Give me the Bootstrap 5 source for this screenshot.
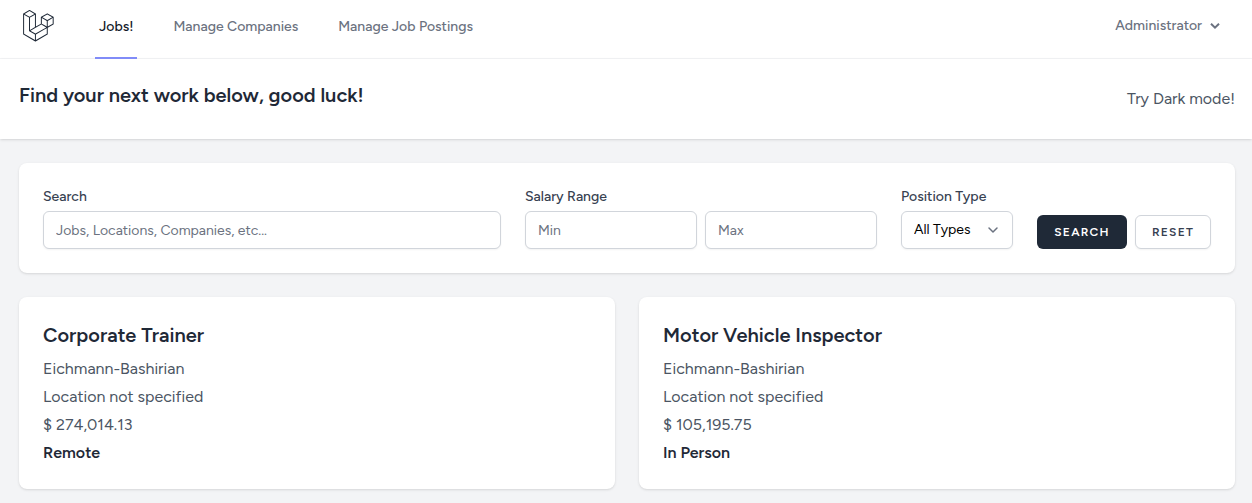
<!DOCTYPE html>
<html lang="en">
<head>
<meta charset="utf-8">
<title>Jobs</title>
<meta name="viewport" content="width=device-width, initial-scale=1">
<link href="https://cdn.jsdelivr.net/npm/bootstrap@5.3.0/dist/css/bootstrap.min.css" rel="stylesheet">
<style>
body { background: #f3f4f6; color: #4b5563; font: 400 16px/24px "Figtree", Inter, "Liberation Sans", sans-serif; }
.gutter { padding-left: 19px; padding-right: 17px; }
.topbar { min-height: 59px; border-bottom: 1px solid #f3f4f6; }
.site-logo { margin: 0 41px 7px 4px; color: #1f2937; }
.tab-list { gap: 32px; }
.tab-link { display: flex; align-items: center; margin-bottom: -1px; padding: 0 4px 4px; font-size: 14px; line-height: 20px; font-weight: 500; color: #6b7280; text-decoration: none; border-bottom: 2px solid transparent; }
.tab-link.current { color: #111827; border-color: #818cf8; }
.user-menu { margin: 0 15px 7px 0; padding: 0; gap: 8px; border: 0; font-size: 14px; line-height: 20px; font-weight: 500; color: #6b7280; }
.page-head { padding-top: 24px; padding-bottom: 24px; min-height: 80px; }
.soft-shadow { box-shadow: 0 1px 3px rgba(0,0,0,.1), 0 1px 2px -1px rgba(0,0,0,.1); }
.page-title { font-size: 20px; line-height: 25px; font-weight: 600; color: #1f2937; }
.theme-link { padding: 4px 0; color: #4b5563; text-decoration: none; }
.panel { background: #fff; border-radius: 8px; padding: 24px; }
.field-label { display: block; margin-bottom: 4px; font-size: 14px; line-height: 20px; font-weight: 500; color: #374151; }
.form-control, .form-select { height: 38px; padding: 8px 12px; font-size: 14px; line-height: 20px; color: #000; border: 1px solid #d1d5db; border-radius: 6px; box-shadow: 0 1px 2px rgba(0,0,0,.05); }
.form-control::placeholder { color: #6b7280; }
.form-select { padding-right: 40px; background-size: 20px 20px; background-position: right 9px center; background-image: url("data:image/svg+xml,%3csvg xmlns='http://www.w3.org/2000/svg' fill='none' viewBox='0 0 20 20'%3e%3cpath stroke='%236b7280' stroke-linecap='round' stroke-linejoin='round' stroke-width='1.5' d='M6 8l4 4 4-4'/%3e%3c/svg%3e"); }
.range-field { width: 352px; }
.type-field { width: 112px; }
.act-btn { height: 34px; padding: 0; font-size: 12px; line-height: 16px; font-weight: 600; letter-spacing: .1em; text-transform: uppercase; border-radius: 6px; }
.act-search { width: 90px; background: #1f2937; color: #fff; }
.act-reset { width: 76px; background: #fff; color: #374151; border: 1px solid #d1d5db; box-shadow: 0 1px 2px rgba(0,0,0,.05); }
.job-title { margin-bottom: 8px; font-size: 20px; line-height: 28px; font-weight: 600; color: #1f2937; }
.job-kind { font-weight: 600; color: #1f2937; }
</style>
</head>
<body>
<nav class="topbar gutter bg-white d-flex justify-content-between" aria-label="Main">
  <div class="d-flex">
    <a class="site-logo d-flex align-items-center" href="#" aria-label="Home">
      <svg width="31" height="32" viewBox="0 0 50 52" fill="currentColor" aria-hidden="true"><path d="M49.626 11.564a.809.809 0 0 1 .028.209v10.972a.8.8 0 0 1-.402.694l-9.209 5.302V39.25c0 .286-.152.55-.4.694L20.42 51.01c-.044.025-.092.041-.14.058-.018.006-.035.017-.054.022a.805.805 0 0 1-.41 0c-.022-.006-.042-.018-.063-.026-.044-.016-.09-.03-.132-.054L.402 39.944A.801.801 0 0 1 0 39.25V6.334c0-.072.01-.142.028-.21.006-.023.02-.044.028-.067.015-.042.029-.085.051-.124.015-.026.037-.047.055-.071.023-.032.044-.065.071-.093.023-.023.053-.04.079-.06.029-.024.055-.05.088-.069h.001l9.61-5.533a.802.802 0 0 1 .8 0l9.61 5.533h.002c.032.02.059.045.088.068.026.02.055.038.078.06.028.029.048.062.072.094.017.024.04.045.054.071.023.04.036.082.052.124.008.023.022.044.028.068a.809.809 0 0 1 .028.209v20.559l8.008-4.611v-10.51c0-.07.01-.141.028-.208.007-.024.02-.045.028-.068.016-.042.03-.085.052-.124.015-.026.037-.047.054-.071.024-.032.044-.065.072-.093.023-.023.052-.04.078-.06.03-.024.056-.05.088-.069h.001l9.611-5.533a.801.801 0 0 1 .8 0l9.61 5.533c.034.02.06.045.09.068.025.02.054.038.077.06.028.029.048.062.072.094.018.024.04.045.054.071.023.039.036.082.052.124.009.023.022.044.028.068zm-1.574 10.718v-9.124l-3.363 1.936-4.646 2.675v9.124l8.01-4.611zm-9.61 16.505v-9.13l-4.57 2.61-13.05 7.448v9.216l17.62-10.144zM1.602 7.719v31.068L19.22 48.93v-9.214l-9.204-5.209-.003-.002-.004-.002c-.031-.018-.057-.044-.086-.066-.025-.02-.054-.036-.076-.058l-.002-.003c-.026-.025-.044-.056-.066-.084-.02-.027-.044-.05-.06-.078l-.001-.003c-.018-.03-.029-.066-.042-.1-.013-.03-.03-.058-.038-.09v-.001c-.01-.038-.012-.078-.016-.117-.004-.03-.012-.06-.012-.09v-.002-21.481L4.965 9.654 1.602 7.72zm8.81-5.994L2.405 6.334l8.005 4.609 8.006-4.61-8.006-4.608zm4.164 28.764l4.645-2.674V7.719l-3.363 1.936-4.646 2.675v20.096l3.364-1.937zM39.243 7.164l-8.006 4.609 8.006 4.609 8.005-4.61-8.005-4.608zm-.801 10.605l-4.646-2.675-3.363-1.936v9.124l4.645 2.674 3.364 1.937v-9.124zM20.02 38.33l11.743-6.704 5.87-3.35-8-4.606-9.211 5.303-8.395 4.833 7.993 4.524z"/></svg>
    </a>
    <div class="tab-list d-flex">
      <a class="tab-link current" href="#" aria-current="page">Jobs!</a>
      <a class="tab-link" href="#">Manage Companies</a>
      <a class="tab-link" href="#">Manage Job Postings</a>
    </div>
  </div>
  <button class="user-menu btn d-flex align-items-center" type="button">Administrator
    <svg width="10" height="6" viewBox="0 0 10 6" fill="none" stroke="currentColor" stroke-width="2" aria-hidden="true"><path d="M1 .7 5 4.6 9 .7"/></svg>
  </button>
</nav>
<header class="page-head gutter bg-white soft-shadow d-flex justify-content-between">
  <h1 class="page-title mb-0">Find your next work below, good luck!</h1>
  <a class="theme-link" href="#">Try Dark mode!</a>
</header>
<main class="gutter py-4 d-flex flex-column gap-4">
  <form class="panel soft-shadow d-flex flex-wrap flex-lg-nowrap align-items-end gap-4">
    <div class="flex-grow-1">
      <label class="field-label" for="q">Search</label>
      <input class="form-control" id="q" type="text" placeholder="Jobs, Locations, Companies, etc...">
    </div>
    <div class="range-field flex-shrink-0">
      <label class="field-label" for="min">Salary Range</label>
      <div class="d-flex gap-2">
        <input class="form-control" id="min" type="text" placeholder="Min">
        <input class="form-control" id="max" type="text" placeholder="Max" aria-label="Maximum salary">
      </div>
    </div>
    <div class="type-field flex-shrink-0">
      <label class="field-label" for="kind">Position Type</label>
      <select class="form-select" id="kind"><option>All Types</option><option>Remote</option><option>In Person</option></select>
    </div>
    <div class="d-flex gap-2">
      <button class="act-btn act-search btn" type="submit">Search</button>
      <button class="act-btn act-reset btn" type="reset">Reset</button>
    </div>
  </form>
  <div class="row row-cols-1 row-cols-md-2 g-4">
    <div class="col">
      <article class="panel soft-shadow d-flex flex-column gap-1">
        <h2 class="job-title mb-1">Corporate Trainer</h2>
        <div>Eichmann-Bashirian</div>
        <div>Location not specified</div>
        <div>$ 274,014.13</div>
        <div class="job-kind">Remote</div>
      </article>
    </div>
    <div class="col">
      <article class="panel soft-shadow d-flex flex-column gap-1">
        <h2 class="job-title mb-1">Motor Vehicle Inspector</h2>
        <div>Eichmann-Bashirian</div>
        <div>Location not specified</div>
        <div>$ 105,195.75</div>
        <div class="job-kind">In Person</div>
      </article>
    </div>
  </div>
</main>
</body>
</html>
